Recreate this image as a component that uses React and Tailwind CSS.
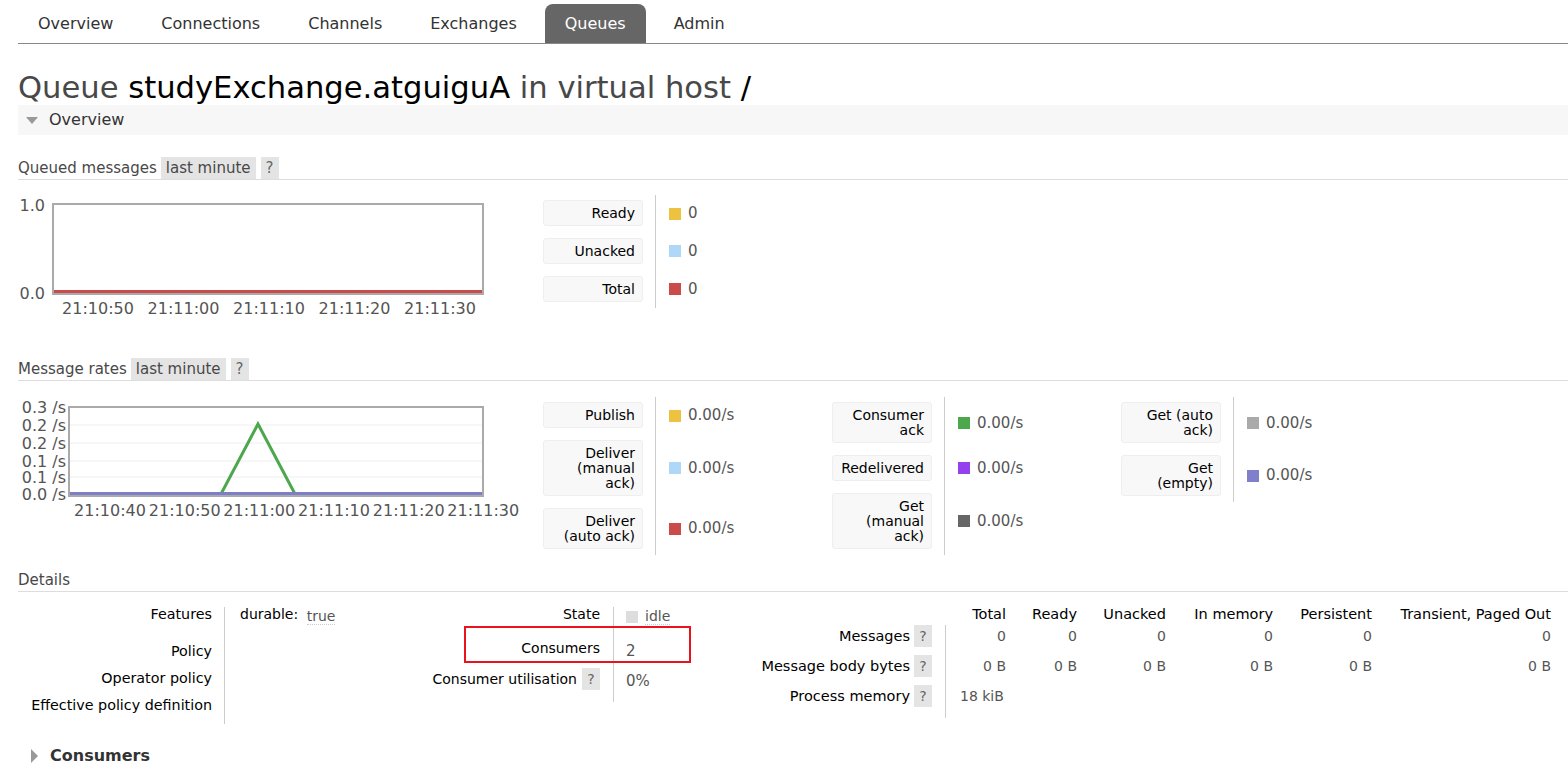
import React from 'react';

const tabs = ['Overview', 'Connections', 'Channels', 'Exchanges', 'Queues', 'Admin'];

const Chip = ({ children, className = '' }) => (
  <span className={`inline-flex h-[22px] items-center justify-center bg-[#e4e4e4] px-[5px] text-[#666] ${className}`}>
    {children}
  </span>
);

const SubHeader = ({ title, chips = true }) => (
  <div className="flex h-[23px] items-center border-b border-[#ddd] text-[15px] text-[#484848]">
    <span>{title}</span>
    {chips && (
      <>
        <Chip className="ml-[4px] text-[#484848]">last minute</Chip>
        <Chip className="ml-[5px] w-[18px]">?</Chip>
      </>
    )}
  </div>
);

const LegendGroup = ({ rows }) => (
  <div className="w-[289px] shrink-0">
    {rows.map((r, i) => (
      <div key={i} className="flex">
        <div className={`w-[112px] shrink-0 pr-[12px] pb-[6px] ${i === 0 ? 'pt-[5px]' : 'pt-[6px]'}`}>
          <div className="rounded-[3px] border border-[#eee] bg-[#f8f8f8] pt-[5px] pb-[4px] pr-[7px] text-right text-[14px] leading-[15px] whitespace-nowrap text-black">
            {r.label.map((l, j) => (
              <div key={j}>{l}</div>
            ))}
          </div>
        </div>
        <div className="flex flex-1 items-center border-l border-[#ccc] pl-[13px]">
          <span className={`h-[12px] w-[12px] ${r.color}`}></span>
          <span className="ml-[7px] text-[15px] text-[#555]">{r.value}</span>
        </div>
      </div>
    ))}
  </div>
);

const QueuedChart = () => {
  const xs = [80, 165.5, 251, 336.5, 422];
  const times = ['21:10:50', '21:11:00', '21:11:10', '21:11:20', '21:11:30'];
  return (
    <svg width="500" height="125" className="block" fontFamily="DejaVu Sans, sans-serif">
      <rect x="35" y="9" width="430" height="90" fill="#fff" stroke="#aaa" strokeWidth="2" />
      <line x1="36" y1="96.5" x2="464" y2="96.5" stroke="#cb4b4b" strokeWidth="3" />
      <text x="27" y="15.5" fontSize="16" fill="#545454" textAnchor="end">1.0</text>
      <text x="27" y="103.5" fontSize="16" fill="#545454" textAnchor="end">0.0</text>
      {xs.map((x, i) => (
        <text key={i} x={x} y="119" fontSize="16" fill="#545454" textAnchor="middle">{times[i]}</text>
      ))}
    </svg>
  );
};

const RatesChart = () => {
  const ys = [10, 28, 46, 64, 80, 97];
  const labels = ['0.3 /s', '0.2 /s', '0.2 /s', '0.1 /s', '0.1 /s', '0.0 /s'];
  const xs = [92, 166.7, 241.3, 316, 390.7, 465.3];
  const times = ['21:10:40', '21:10:50', '21:11:00', '21:11:10', '21:11:20', '21:11:30'];
  return (
    <svg width="510" height="125" className="block" fontFamily="DejaVu Sans, sans-serif">
      <rect x="51" y="10" width="414" height="89" fill="#fff" stroke="#aaa" strokeWidth="2" />
      {[28, 46, 64, 80].map((y) => (
        <line key={y} x1="52" y1={y} x2="464" y2={y} stroke="#eee" strokeWidth="1" />
      ))}
      <polyline points="203,97 240,27 277,97" fill="none" stroke="#4da74d" strokeWidth="3" strokeLinejoin="miter" />
      <line x1="52" y1="96.5" x2="464" y2="96.5" stroke="#7e7ec8" strokeWidth="3" />
      {ys.map((y, i) => (
        <text key={i} x="48" y={y + 5.5} fontSize="16" fill="#545454" textAnchor="end">{labels[i]}</text>
      ))}
      {xs.map((x, i) => (
        <text key={i} x={x} y="119" fontSize="16" fill="#545454" textAnchor="middle">{times[i]}</text>
      ))}
    </svg>
  );
};

const rightCols = ['w-[61px]', 'w-[71px]', 'w-[89px]', 'w-[107px]', 'w-[99px]', 'w-[179px]'];
const rightHeads = ['Total', 'Ready', 'Unacked', 'In memory', 'Persistent', 'Transient, Paged Out'];

export default function App() {
  return (
    <div className="min-h-[778px] bg-white pl-[18px] font-['DejaVu_Sans',sans-serif] text-[14px] text-black">
      {/* Tabs */}
      <div className="flex gap-[8px] border-b border-[#888] pt-[4px]">
        {tabs.map((t) => (
          <div
            key={t}
            className={`flex h-[39px] items-center rounded-t-[8px] px-[20px] text-[16px] ${
              t === 'Queues' ? 'bg-[#666] text-white' : 'text-[#333]'
            }`}
          >
            {t}
          </div>
        ))}
      </div>

      <h1 className="mt-[26px] text-[30.6px] leading-[35px] whitespace-nowrap text-[#484848]">
        Queue <span className="text-black">studyExchange.atguiguA</span> in virtual host <span className="text-black">/</span>
      </h1>

      <div className="flex h-[30px] items-center bg-[#f7f7f7] text-[16px] text-[#333]">
        <span className="ml-[8px] h-0 w-0 border-x-[6.5px] border-t-[7px] border-x-transparent border-t-[#999]"></span>
        <span className="ml-[11px]">Overview</span>
      </div>

      {/* Queued messages */}
      <div className="mt-[22px]">
        <SubHeader title="Queued messages" />
        <div className="flex h-[178px] pt-[15px]">
          <div className="w-[525px] shrink-0">
            <QueuedChart />
          </div>
          <LegendGroup
            rows={[
              { label: ['Ready'], color: 'bg-[#edc240]', value: '0' },
              { label: ['Unacked'], color: 'bg-[#afd8f8]', value: '0' },
              { label: ['Total'], color: 'bg-[#cb4b4b]', value: '0' },
            ]}
          />
        </div>
      </div>

      {/* Message rates */}
      <SubHeader title="Message rates" />
      <div className="flex h-[188px] items-start pt-[16px]">
        <div className="w-[525px] shrink-0">
          <RatesChart />
        </div>
        <LegendGroup
          rows={[
            { label: ['Publish'], color: 'bg-[#edc240]', value: '0.00/s' },
            { label: ['Deliver', '(manual', 'ack)'], color: 'bg-[#afd8f8]', value: '0.00/s' },
            { label: ['Deliver', '(auto ack)'], color: 'bg-[#cb4b4b]', value: '0.00/s' },
          ]}
        />
        <LegendGroup
          rows={[
            { label: ['Consumer', 'ack'], color: 'bg-[#4da74d]', value: '0.00/s' },
            { label: ['Redelivered'], color: 'bg-[#9440ed]', value: '0.00/s' },
            { label: ['Get', '(manual', 'ack)'], color: 'bg-[#666]', value: '0.00/s' },
          ]}
        />
        <LegendGroup
          rows={[
            { label: ['Get (auto', 'ack)'], color: 'bg-[#aaa]', value: '0.00/s' },
            { label: ['Get', '(empty)'], color: 'bg-[#7f7fcc]', value: '0.00/s' },
          ]}
        />
      </div>

      {/* Details */}
      <SubHeader title="Details" chips={false} />
      <div className="flex pt-[15px] leading-[15px]">
        {/* left */}
        <div className="w-[382px] shrink-0">
          {[
            ['Features', 'h-[37px]'],
            ['Policy', 'h-[27px]'],
            ['Operator policy', 'h-[27px]'],
            ['Effective policy definition', 'h-[26px]'],
          ].map(([label, h], i) => (
            <div key={label} className={`flex ${h}`}>
              <div className="w-[206px] shrink-0 pr-[12px] text-right text-[14.3px] whitespace-nowrap">{label}</div>
              <div className="flex-1 border-l border-[#ccc] pl-[15px]">
                {i === 0 && (
                  <span className="whitespace-nowrap">
                    durable:{' '}
                    <span className="ml-[4px] inline-block translate-y-[2px] border-b border-dotted border-[#ccc] text-[#555]">true</span>
                  </span>
                )}
              </div>
            </div>
          ))}
        </div>

        {/* middle */}
        <div className="relative w-[345px] shrink-0">
          <div className="flex h-[34px]">
            <div className="w-[213px] shrink-0 pr-[13px] text-right">State</div>
            <div className="flex-1 border-l border-[#ccc] pl-[12px]">
              <span className="inline-flex items-center">
                <span className="mt-[4px] h-[12px] w-[12px] bg-[#ddd]"></span>
                <span className="ml-[7px] translate-y-[2px] border-b border-dotted border-[#ccc] text-[#555]">idle</span>
              </span>
            </div>
          </div>
          <div className="flex h-[27px]">
            <div className="w-[213px] shrink-0 pr-[13px] text-right">Consumers</div>
            <div className="flex-1 border-l border-[#ccc] pl-[12px] pt-[3px] text-[15px] text-[#555]">2</div>
          </div>
          <div className="flex h-[34px]">
            <div className="flex w-[213px] shrink-0 items-start justify-end pr-[13px]">
              <span className="leading-[22px]">Consumer utilisation</span>
              <Chip className="ml-[5px] w-[18px]">?</Chip>
            </div>
            <div className="flex-1 border-l border-[#ccc] pl-[12px] pt-[6px] text-[15px] text-[#555]">0%</div>
          </div>
          <div className="pointer-events-none absolute top-[19px] left-[64px] h-[37px] w-[227px] border-2 border-[#e8141c]"></div>
        </div>

        {/* right */}
        <div className="shrink-0">
          <div className="flex h-[18px] text-[14.5px]">
            <div className="w-[200px] shrink-0"></div>
            {rightHeads.map((h, i) => (
              <div key={h} className={`${rightCols[i]} shrink-0 text-right whitespace-nowrap`}>{h}</div>
            ))}
          </div>
          {[
            ['Messages', ['0', '0', '0', '0', '0', '0'], 'h-[30px]'],
            ['Message body bytes', ['0 B', '0 B', '0 B', '0 B', '0 B', '0 B'], 'h-[30px]'],
            ['Process memory', null, 'h-[33px]'],
          ].map(([label, vals, h]) => (
            <div key={label} className={`flex ${h} leading-[22px]`}>
              <div className="flex w-[200px] shrink-0 items-start justify-end pr-[13px]">
                <span className="whitespace-nowrap text-[14.5px]">{label}</span>
                <Chip className="ml-[4px] w-[18px]">?</Chip>
              </div>
              {vals ? (
                vals.map((v, i) => (
                  <div
                    key={i}
                    className={`${rightCols[i]} shrink-0 text-right text-[#555] ${i === 0 ? 'border-l border-[#ccc]' : ''}`}
                  >
                    {v}
                  </div>
                ))
              ) : (
                <div className="w-[61px] shrink-0 border-l border-[#ccc] pl-[14px] whitespace-nowrap text-[#555]">18 kiB</div>
              )}
            </div>
          ))}
        </div>
      </div>

      {/* Consumers */}
      <div className="mt-[17px] flex h-[30px] items-center">
        <span className="ml-[13px] h-0 w-0 border-y-[7.5px] border-l-[7px] border-y-transparent border-l-[#999]"></span>
        <span className="ml-[12px] text-[16px] font-bold text-[#333]">Consumers</span>
      </div>
    </div>
  );
}
